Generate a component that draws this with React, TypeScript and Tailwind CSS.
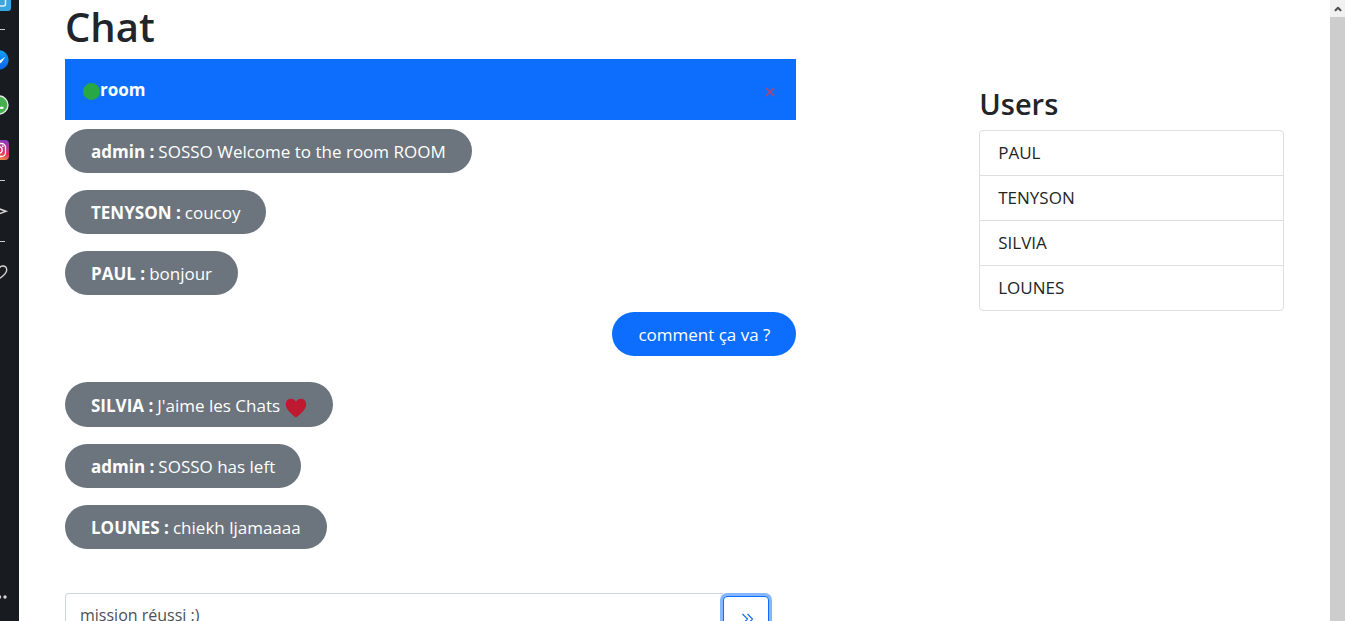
import { useState } from 'react'
import { clsx } from 'clsx'
import { ChevronUp } from 'lucide-react'

type Message = { from?: string; text: string; heart?: boolean }

const MESSAGES: Message[] = [
  { from: 'admin',   text: 'SOSSO Welcome to the room ROOM' },
  { from: 'TENYSON', text: 'coucoy' },
  { from: 'PAUL',    text: 'bonjour' },
  { text: 'comment ça va ?' },
  { from: 'SILVIA',  text: "J'aime les Chats", heart: true },
  { from: 'admin',   text: 'SOSSO has left' },
  { from: 'LOUNES',  text: 'chiekh ljamaaaa' },
]

const USERS = ['PAUL', 'TENYSON', 'SILVIA', 'LOUNES']

function Heart() {
  return (
    <svg viewBox="0 0 22 20" className="ml-[5px] mt-1 h-5 w-[22px]" aria-hidden="true">
      <path d="M11 19.5C9 18 .8 12.300 .8 6.500C.8 3.200 3 .8 6 .8C8.200 .8 10 2 11 3.800C12 2 13.800 .8 16 .8C19 .8 21.200 3.200 21.200 6.500C21.200 12.300 13 18 11 19.500Z" fill="#be1931" />
    </svg>
  )
}

// Barre latérale du navigateur
function Sidebar() {
  return (
    <aside className="w-[19px] shrink-0 overflow-hidden bg-[#181b20]">
      <div className="-ml-[13px] flex h-full w-6 flex-col items-center pb-[14px]">
        <svg viewBox="0 0 24 22" className="-mt-[11px] h-[22px] w-6 shrink-0">
          <rect width="24" height="22" rx="3" fill="#3ba5df" />
          <rect x="6" y="4" width="12.500" height="13" rx="2" fill="none" stroke="#d9f1fc" strokeWidth="1.5" />
        </svg>
        <div className="mt-[18px] h-px w-3 shrink-0 bg-[#c9cbcd]" />
        <svg viewBox="0 0 20 20" className="mt-5 h-5 w-5 shrink-0">
          <defs>
            <linearGradient id="msg" x1="0" y1="0" x2="0" y2="1">
              <stop offset="0" stopColor="#13a0f5" />
              <stop offset="1" stopColor="#0b62ee" />
            </linearGradient>
          </defs>
          <circle cx="10" cy="10" r="9.700" fill="url(#msg)" />
          <path d="M4 13L8.500 8L11.500 10.300L16.200 6.800L12.500 12.500L10.500 13.500L8.500 11Z" fill="#fff" />
        </svg>
        <svg viewBox="0 0 20 20" className="mt-[25px] h-5 w-5 shrink-0">
          <circle cx="10" cy="10" r="9" fill="#46b04f" stroke="#e4e8e5" strokeWidth="1.400" />
          <path d="M6 6C5 10 10 14.500 13.500 14C15 13.500 15 12 14 11.700L12 11.500L11 12.400C9.500 11.800 8.300 10.500 7.800 9.200L8.500 8L7.500 5.500Z" fill="#fff" />
        </svg>
        <svg viewBox="0 0 20 20" className="mt-[25px] h-5 w-5 shrink-0">
          <defs>
            <linearGradient id="insta" x1=".3" y1="1" x2=".7" y2="0">
              <stop offset="0" stopColor="#fba83d" />
              <stop offset=".45" stopColor="#e2325e" />
              <stop offset="1" stopColor="#8a38c0" />
            </linearGradient>
          </defs>
          <rect width="20" height="20" rx="4" fill="url(#insta)" />
          <rect x="3.500" y="3.500" width="13" height="13" rx="4" fill="none" stroke="#fff" strokeWidth="1.300" />
          <circle cx="10" cy="10" r="3.200" fill="none" stroke="#fff" strokeWidth="1.300" />
          <circle cx="13.800" cy="6.200" r=".9" fill="#fff" />
        </svg>
        <div className="mt-5 h-px w-3 shrink-0 bg-[#c9cbcd]" />
        <svg viewBox="0 0 20 20" className="mt-5 h-5 w-5 shrink-0" fill="none" stroke="#d3d5d7" strokeWidth="1.500">
          <path d="M4 5.500L17 10.300L4 15L6 10.300Z" />
        </svg>
        <div className="mt-5 h-px w-3 shrink-0 bg-[#c9cbcd]" />
        <svg viewBox="0 0 20 20" className="mt-5 h-5 w-5 shrink-0" fill="none" stroke="#d3d5d7" strokeWidth="1.400">
          <path d="M10 17C7 14.500 2.300 12 2.300 8C2.300 5.500 4 4 6.200 4C8 4 9.300 5 10 6.500C10.700 5 12 4 13.800 4C16 4 17.700 5.500 17.700 8C17.700 12 13 14.500 10 17Z" />
        </svg>
        <svg viewBox="0 0 20 20" className="mt-auto h-5 w-5 shrink-0" fill="#d3d5d7">
          <circle cx="5" cy="10" r="1.700" />
          <circle cx="10.500" cy="10" r="1.700" />
          <circle cx="16" cy="10" r="1.700" />
        </svg>
      </div>
    </aside>
  )
}

function Bubble({ message }: { message: Message }) {
  const mine = !message.from
  return (
    <li
      className={clsx(
        'flex items-center rounded-full px-[26px] pt-0.5 text-white',
        message.heart ? 'h-[45px]' : 'h-11',
        mine ? 'mb-[9px] self-end bg-[#0d6efd]' : 'self-start bg-[#6c757d]',
      )}
    >
      {message.from && <strong className="mr-1 font-bold">{message.from} :</strong>}
      {message.text}
      {message.heart && <Heart />}
    </li>
  )
}

export default function App() {
  const [draft, setDraft] = useState('mission réussi :)')

  return (
    <div className="flex h-screen overflow-hidden bg-white font-['Segoe_UI','Open_Sans',sans-serif] text-[17px] leading-[26px] text-[#212529]">
      <Sidebar />

      <main className="flex flex-1 items-start justify-between px-[46px]">
        <section className="w-3/5">
          <h1 className="text-[40px] leading-[54px] font-semibold">Chat</h1>

          <header className="mt-[5px] flex h-[61px] items-center justify-between bg-[#0d6efd] pr-[17px] pl-[18px] text-white">
            <div className="flex items-center">
              <span className="mt-1 h-[17px] w-[17px] rounded-full bg-[#28a745]" />
              <span className="font-bold">room</span>
            </div>
            <button type="button" aria-label="Fermer" className="mt-1 p-1">
              <svg viewBox="0 0 10 10" className="h-[10px] w-[10px]" stroke="#b54370" strokeWidth="1.600">
                <path d="M1 1L9 9M9 1L1 9" />
              </svg>
            </button>
          </header>

          <ul className="mt-[9px] flex flex-col gap-[17px]">
            {MESSAGES.map((m, i) => <Bubble key={i} message={m} />)}
          </ul>

          <form className="mt-11 flex items-start pr-[27px]" onSubmit={e => e.preventDefault()}>
            <input
              type="text"
              aria-label="Message"
              value={draft}
              onChange={e => setDraft(e.target.value)}
              className="h-[43px] min-w-0 flex-1 rounded-l border border-r-0 border-[#ced4da] px-[14px] text-base text-[#495057] outline-none"
            />
            <button
              type="submit"
              aria-label="Envoyer"
              className="mt-[3px] flex h-[42px] w-[46px] items-center justify-center rounded border border-[#0d6efd] bg-white ring-3 ring-[#86b7fe]"
            >
              <svg viewBox="0 0 14 12" className="mt-1 ml-1 h-3 w-[14px]" fill="none" stroke="#0d6efd" strokeWidth="1.200">
                <path d="M1.500 1L6.500 6L1.500 11M6.500 1L11.500 6L6.500 11" />
              </svg>
            </button>
          </form>
        </section>

        <section className="w-1/4 pt-[84px]">
          <h2 className="text-[29px] leading-10 font-semibold">Users</h2>
          <ul className="mt-1.5 divide-y divide-[#dfdfdf] rounded border border-[#dfdfdf]">
            {USERS.map(u => (
              <li key={u} className="px-[18px] py-[9px]">{u}</li>
            ))}
          </ul>
        </section>
      </main>

      {/* Barre de défilement */}
      <div className="flex w-[15px] shrink-0 flex-col bg-[#cdcdcd]">
        <div className="flex h-[17px] items-center justify-center bg-[#f1f1f1]">
          <ChevronUp className="h-[10px] w-[10px] text-[#505050]" strokeWidth={5} />
        </div>
      </div>
    </div>
  )
}
